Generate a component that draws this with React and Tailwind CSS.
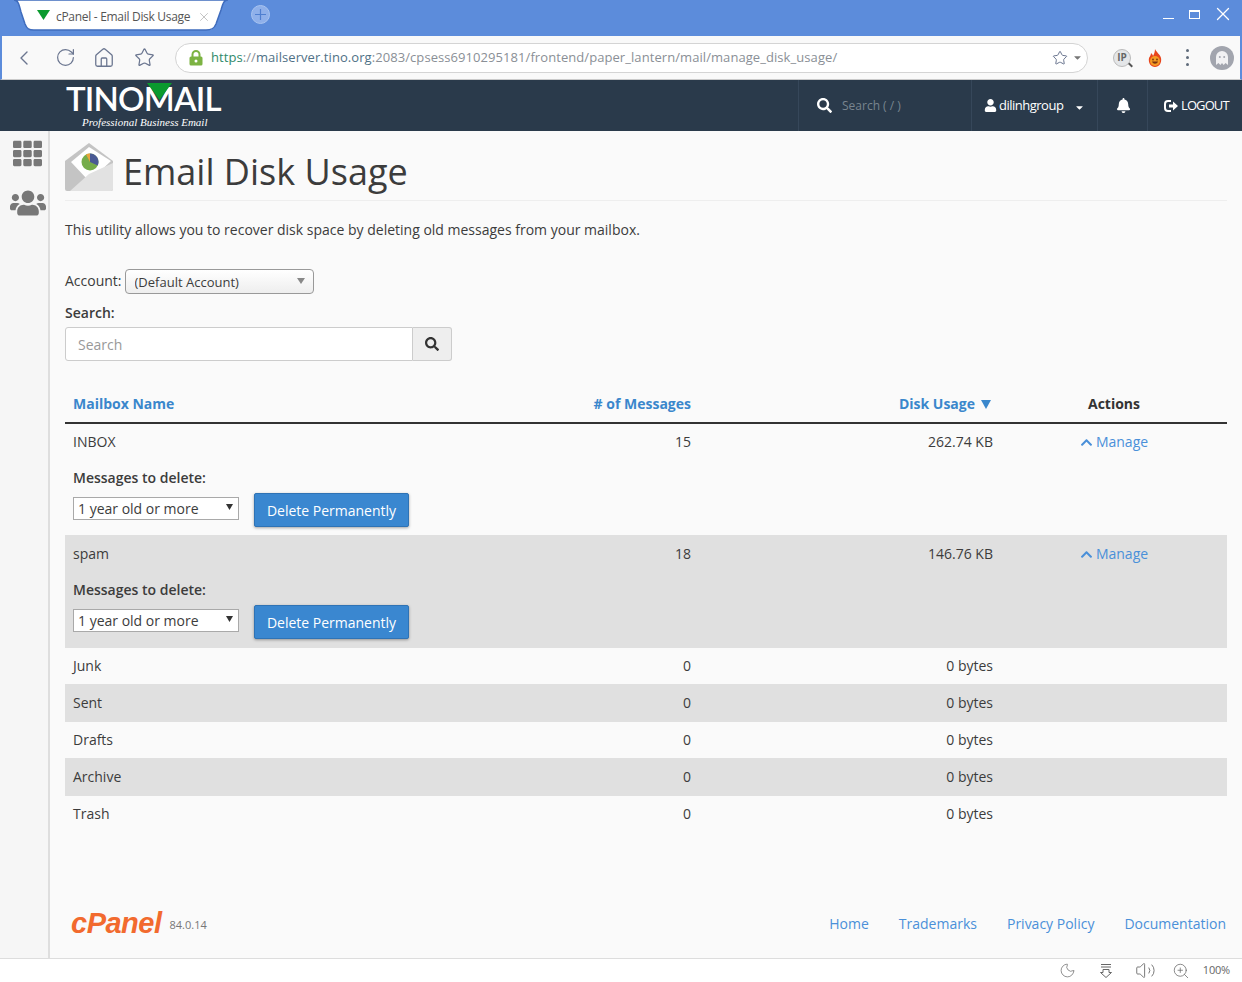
import { ChevronLeft, RotateCw, Home, Star, Moon, Volume2, ZoomIn, X } from 'lucide-react';
import { FaSearch, FaUser, FaBell, FaTh, FaUsers, FaChevronUp, FaCaretDown } from 'react-icons/fa';

// columns of the mailbox table
const cols = 'grid grid-cols-[375px_259px_302px_226px]';

function TabShape() {
  return (
    <svg className="absolute left-[8px] top-0" width="224" height="33" viewBox="0 0 224 33">
      <path d="M6 0 C10 0 11 4 13 12 L17 24 C19 29 21 30 26 30 L198 30 C203 30 206 29 208 24 L213 10 C215 3 216 0 220 0 Z" fill="#fff" stroke="#3f6cbd" strokeWidth="1.5" />
    </svg>
  );
}

function Browser() {
  return (
    <>
      {/* title bar */}
      <div className="relative h-9 bg-[#5c8cdb] flex items-start text-white">
        <TabShape />
        <div className="relative flex items-center h-[30px] pl-[37px]">
          <svg width="13" height="10" viewBox="0 0 13 10"><path d="M0 0H13L6.5 10Z" fill="#0a9a2e" /></svg>
          <span className="ml-[6px] mt-[4px] text-[12px] text-[#555] tracking-[-0.3px] whitespace-nowrap">cPanel - Email Disk Usage</span>
          <X className="ml-[7px] mt-[4px] text-[#999]" size={14} strokeWidth={1} />
        </div>
        <div className="relative ml-[40px] mt-[5px] w-[19px] h-[19px] rounded-full bg-[#8fb0ea] border border-[#a9c4f0] flex items-center justify-center">
          <svg width="13" height="13" viewBox="0 0 13 13"><path d="M6.5 1V12M1 6.5H12" stroke="#4f7fd0" strokeWidth="1.2" /></svg>
        </div>
        <div className="ml-auto flex items-center h-7 pr-[8px]">
          <div className="w-[11px] h-px bg-white mt-[9px]" />
          <div className="ml-[15px] w-[11px] h-[9px] border border-white border-t-2" />
          <X className="ml-[12px]" size={22} strokeWidth={1.4} />
        </div>
      </div>
      {/* toolbar */}
      <div className="h-11 bg-[#f9f9f9] border-l-2 border-r-2 border-[#5c8cdb] border-b border-b-[#d0d0d0] flex items-center text-[#6b7690]">
        <ChevronLeft className="ml-[10px]" size={24} strokeWidth={1.4} />
        <RotateCw className="ml-[19px]" size={21} strokeWidth={1.4} />
        <Home className="ml-[17px]" size={22} strokeWidth={1.4} />
        <Star className="ml-[19px]" size={21} strokeWidth={1.4} />
        <div className="ml-[20px] w-[913px] h-[30px] bg-white rounded-full border border-[#d4d4d4] flex items-center pl-[13px] pr-[4px]">
          <svg width="14" height="16" viewBox="0 0 14 16">
            <path d="M3.5 7V4.5a3.5 3.5 0 0 1 7 0V7" fill="none" stroke="#7cb342" strokeWidth="2" />
            <rect x="0.5" y="6.5" width="13" height="9" rx="1.5" fill="#7cb342" />
            <circle cx="7" cy="11" r="1.5" fill="#fff" />
          </svg>
          <span className="ml-[8px] text-[13px] tracking-[0.07px] text-[#8a8f96] whitespace-nowrap">
            <span className="text-[#2f8a6a]">https</span>://<span className="text-[#4f7186]">mailserver.tino.org</span>:2083/cpsess6910295181/frontend/paper_lantern/mail/manage_disk_usage/
          </span>
          <Star className="ml-auto" size={16} strokeWidth={1.5} />
          <FaCaretDown className="ml-[4px] text-[#777]" size={11} />
        </div>
        <div className="relative ml-[25px] w-[18px] h-[18px] rounded-full bg-[#e4e6e8] border border-[#bbb] text-[10px] font-bold text-[#666] flex items-center justify-center">
          IP
          <div className="absolute -right-[3px] bottom-[0px] w-[5px] h-[2px] bg-[#555] rotate-45" />
        </div>
        <svg className="ml-[16px]" width="16" height="18" viewBox="0 0 16 18">
          <path d="M8 0C9 3 13 5 14 9C15 14 12 18 8 18C4 18 1 14 2 9C3 7 4 6 4 4C5 5 6 6 6 7C7 5 8 3 8 0Z" fill="#e8451c" />
          <circle cx="8" cy="12" r="5" fill="#f59a23" />
          <circle cx="6" cy="10.5" r="0.9" fill="#7a3410" />
          <circle cx="10" cy="10.5" r="0.9" fill="#7a3410" />
          <path d="M5 12.5C6 15.5 10 15.5 11 12.5Z" fill="#7a3410" />
        </svg>
        <div className="ml-[23px] flex flex-col gap-[4px]">
          <div className="w-[3px] h-[3px] rounded-full bg-[#5f6b7a]" />
          <div className="w-[3px] h-[3px] rounded-full bg-[#5f6b7a]" />
          <div className="w-[3px] h-[3px] rounded-full bg-[#5f6b7a]" />
        </div>
        <div className="ml-[21px] w-6 h-6 rounded-full bg-[#a2a5ae] flex items-center justify-center">
          <svg width="14" height="15" viewBox="0 0 14 15">
            <path d="M1 15V7a6 6 0 0 1 12 0v8l-2.4-2-2 2L7 13l-1.6 2-2-2Z" fill="#f1f1f3" />
            <circle cx="4.8" cy="7" r="1" fill="#a2a5ae" />
            <circle cx="9.2" cy="7" r="1" fill="#a2a5ae" />
          </svg>
        </div>
      </div>
    </>
  );
}

function NavBar() {
  return (
    <div className="h-[51px] bg-[#2a3a4b] flex text-white shadow-[0_1px_2px_rgba(0,0,0,0.4)]">
      <div className="pl-[66px] w-[300px]">
        <div className="relative w-[160px] h-[36px] text-[33px] leading-[36px] font-['Lato',sans-serif] font-semibold tracking-[-0.8px] whitespace-nowrap">
          TINOMAIL
          <svg className="absolute left-[81px] top-[3px]" width="25" height="17" viewBox="0 0 25 17"><path d="M0 0H25L12.5 17Z" fill="#0a9a2e" /></svg>
        </div>
        <div className="pl-[16px] text-[11px] leading-[13px] italic font-['Liberation_Serif',serif] whitespace-nowrap">Professional Business Email</div>
      </div>
      <div className="ml-auto flex">
        <div className="w-[173px] border-l border-[#36475a] flex items-center pl-[18px]">
          <FaSearch size={15} />
          <span className="ml-[10px] text-[12px] text-[#79858f]">Search ( / )</span>
        </div>
        <div className="w-[126px] border-l border-[#36475a] flex items-center pl-[12px]">
          <FaUser size={13} />
          <span className="ml-[2px] text-[13px] tracking-[-0.5px]">dilinhgroup</span>
          <FaCaretDown className="ml-[11px] mt-[3px]" size={11} />
        </div>
        <div className="w-[50px] border-l border-[#36475a] flex items-center justify-center pl-px">
          <FaBell size={15} />
        </div>
        <div className="w-[95px] border-l border-[#36475a] flex items-center pl-[16px]">
          <svg width="14" height="12" viewBox="0 0 14 12">
            <path d="M7 1H4a3 3 0 0 0-3 3v4a3 3 0 0 0 3 3h3" fill="none" stroke="#fff" strokeWidth="2" />
            <path d="M5 4.5H9V1.5L14 6 9 10.5V7.5H5Z" fill="#fff" />
          </svg>
          <span className="ml-[3px] text-[13px] tracking-[-0.9px]">LOGOUT</span>
        </div>
      </div>
    </div>
  );
}

function Sidebar() {
  return (
    <div className="w-[50px] shrink-0 bg-[#f6f6f6] border-r-2 border-[#dedede] flex flex-col items-center text-[#787878]">
      <FaTh className="mt-[8px] ml-[7px]" size={29} />
      <FaUsers className="mt-[17px] ml-[8px]" size={36} />
    </div>
  );
}

function EnvelopeIcon() {
  return (
    <svg width="48" height="48" viewBox="0 0 48 48" className="shrink-0">
      <path d="M0 18 L24 0 L48 18 V46 a2 2 0 0 1 -2 2 H2 a2 2 0 0 1 -2 -2 Z" fill="#c4c4c4" />
      <path d="M24 4 L46 18 L27 36 H22 L6 19 Z" fill="#fff" />
      <path d="M48 20 V46 a2 2 0 0 1 -2 2 H5 L24 31 Z" fill="#e2e2e2" />
      <circle cx="25" cy="19" r="8.5" fill="#75ac4a" />
      <path d="M25 19 V10.5 A8.5 8.5 0 0 1 32.8 22.4 Z" fill="#4a5a94" />
      <path d="M25 19 L21 11.5 A8.5 8.5 0 0 1 25 10.5 Z" fill="#e8a33d" />
    </svg>
  );
}

function DeleteControls() {
  return (
    <div className="col-span-4 pl-2 pt-[16px]">
      <div className="font-semibold leading-5">Messages to delete:</div>
      <div className="flex items-start mt-[5px]">
        <div className="relative mt-[4px]">
          <select className="w-[166px] h-[23px] appearance-none bg-white border border-[#a9a9a9] pl-[4px] text-[14px] leading-5 outline-none">
            <option>1 year old or more</option>
          </select>
          <svg className="absolute right-[6px] top-[7px]" width="7" height="6" viewBox="0 0 7 6"><path d="M0 0H7L3.5 6Z" fill="#333" /></svg>
        </div>
        <button className="ml-[15px] h-[34px] w-[155px] bg-[#3a87d0] border border-[#2f73b5] rounded-[2px] text-white text-[14px] shadow-[0_1px_3px_rgba(0,0,0,0.35)]">Delete Permanently</button>
      </div>
    </div>
  );
}

function ManageLink() {
  return (
    <span className="flex items-center justify-center text-[#4a90d9]">
      <FaChevronUp size={13} />
      <span className="ml-[3px]">Manage</span>
    </span>
  );
}

function Row({ name, count, usage, open, shaded }) {
  return (
    <div className={`${cols} content-start border-t border-transparent ${open ? 'h-[112px]' : 'h-[37px]'} ${shaded ? 'bg-[#e0e0e0] shadow-[0_-1px_0_#e0e0e0]' : ''}`}>
      <div className="pl-2 pt-[7px] leading-5">{name}</div>
      <div className="pr-2 pt-[7px] leading-5 text-right">{count}</div>
      <div className="pr-2 pt-[7px] leading-5 text-right">{usage}</div>
      <div className="pt-[7px] leading-5">{open && <ManageLink />}</div>
      {open && <DeleteControls />}
    </div>
  );
}

function Content() {
  return (
    <div className="flex-1 min-w-0 bg-[#fafafa] px-[15px] flex flex-col">
      <div className="h-[70px] pt-[12px] border-b border-[#eee] flex items-start">
        <EnvelopeIcon />
        <h1 className="ml-[10px] text-[36px] leading-[58px]">Email Disk Usage</h1>
      </div>
      <p className="mt-[19px] leading-5">This utility allows you to recover disk space by deleting old messages from your mailbox.</p>
      <div className="mt-[28px] flex items-center h-[26px]">
        <span className="leading-5">Account:</span>
        <div className="relative ml-[3px]">
          <select className="w-[189px] h-[25px] appearance-none rounded-[4px] border border-[#999] bg-gradient-to-b from-white to-[#eeeeee] pl-[9px] pt-[3px] text-[13px] outline-none">
            <option>(Default Account)</option>
          </select>
          <svg className="absolute right-[9px] top-[9px]" width="8" height="6" viewBox="0 0 8 6"><path d="M0 0H8L4 6Z" fill="#888" /></svg>
        </div>
      </div>
      <label className="mt-[9px] font-semibold leading-5 block">Search:</label>
      <div className="mt-[4px] flex w-[387px] h-[34px]">
        <input placeholder="Search" className="flex-1 min-w-0 bg-white border border-[#ccc] rounded-l-[3px] px-3 text-[14px] outline-none placeholder:text-[#999]" />
        <div className="w-[39px] bg-[#eee] border border-l-0 border-[#ccc] rounded-r-[3px] flex items-center justify-center">
          <FaSearch size={14} className="text-[#333]" />
        </div>
      </div>
      {/* mailbox table */}
      <div className="mt-[24px]">
        <div className={`${cols} h-[39px] border-b-2 border-[#333] font-bold pt-[9px] leading-5 text-[#3a87cc]`}>
          <div className="pl-2">Mailbox Name</div>
          <div className="pr-2 text-right"># of Messages</div>
          <div className="pr-2 h-5 flex items-center justify-end">
            Disk Usage
            <svg className="ml-[6px] mr-[2px]" width="10" height="9" viewBox="0 0 10 9"><path d="M0 0H10L5 9Z" fill="#3a87cc" /></svg>
          </div>
          <div className="text-center text-[#333]">Actions</div>
        </div>
        <Row name="INBOX" count="15" usage="262.74 KB" open />
        <Row name="spam" count="18" usage="146.76 KB" open shaded />
        <Row name="Junk" count="0" usage="0 bytes" />
        <Row name="Sent" count="0" usage="0 bytes" shaded />
        <Row name="Drafts" count="0" usage="0 bytes" />
        <Row name="Archive" count="0" usage="0 bytes" shaded />
        <Row name="Trash" count="0" usage="0 bytes" />
      </div>
      <div className="mt-auto pb-[19px] flex items-center">
        <span className="ml-[6px] text-[#f26a2e] text-[29px] leading-[32px] font-bold italic tracking-[-0.5px] font-['Liberation_Sans',sans-serif]">cPanel</span>
        <span className="ml-[8px] mt-[4px] text-[11px] text-[#777]">84.0.14</span>
        <div className="ml-auto flex gap-[30px] text-[#4a90d9] pr-px">
          <a>Home</a>
          <a>Trademarks</a>
          <a>Privacy Policy</a>
          <a>Documentation</a>
        </div>
      </div>
    </div>
  );
}

function StatusBar() {
  return (
    <div className="h-6 bg-white border-t border-[#ddd] flex items-center justify-end pr-[12px] text-[#666]">
      <Moon size={17} strokeWidth={1} />
      <svg className="ml-[23px]" width="14" height="15" viewBox="0 0 14 15" fill="none" stroke="#666">
        <path d="M2 1.5H12M2 4H12M4 6.5V9.5H1.5L7 14.5L12.5 9.5H10V6.5Z" />
      </svg>
      <Volume2 className="ml-[22px]" size={21} strokeWidth={1} />
      <ZoomIn className="ml-[16px]" size={18} strokeWidth={1} />
      <span className="ml-[13px] text-[11px] tracking-[-0.2px]">100%</span>
    </div>
  );
}

export default function App() {
  return (
    <div className="w-[1242px] h-[982px] overflow-hidden flex flex-col text-[14px] text-[#3c3c3c] font-['Open_Sans',sans-serif]">
      <Browser />
      <NavBar />
      <div className="flex-1 min-h-0 flex">
        <Sidebar />
        <Content />
      </div>
      <StatusBar />
    </div>
  );
}
